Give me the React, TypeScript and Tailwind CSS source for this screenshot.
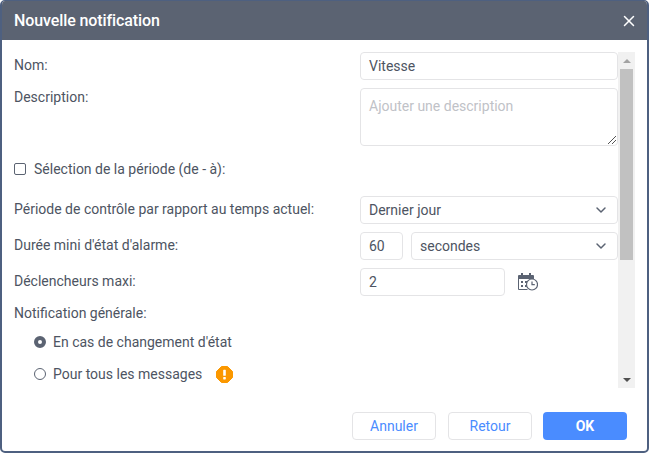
import React from 'react';
import { X, ChevronDown } from 'lucide-react';

const fieldClass = 'h-[28px] border border-[#e4e4e6] rounded-[4px] bg-white px-[8px] flex items-center text-[14px] text-[#4d5462]';

const SelectBox = ({ value, className }: { value: string; className: string }) => (
  <div className={`${fieldClass} justify-between ${className}`}>
    <span>{value}</span>
    <ChevronDown className="w-[16px] h-[16px] text-[#5b6372]" strokeWidth={2.2} />
  </div>
);

const Row = ({ label, className, labelClass = 'pt-[1px]', children }: { label: string; className: string; labelClass?: string; children?: React.ReactNode }) => (
  <div className={`flex items-start ${className}`}>
    <div className={`w-[346px] shrink-0 leading-[24px] ${labelClass}`}>{label}</div>
    {children}
  </div>
);

const CalendarClock = () => (
  <svg width="20" height="18" viewBox="0 0 20 18" className="ml-[13px] mt-[5px]">
    <path d="M3 0h2v2h6V0h2v2h2a1 1 0 0 1 1 1v3H0V3a1 1 0 0 1 1-1h2z" fill="#5b6372" />
    <path d="M.5 6v10.5h9" fill="none" stroke="#5b6372" />
    <rect x="3" y="8" width="2" height="2" fill="#5b6372" />
    <rect x="3" y="12" width="2" height="2" fill="#5b6372" />
    <rect x="7" y="8" width="2" height="2" fill="#5b6372" />
    <rect x="7" y="12" width="2" height="2" fill="#5b6372" />
    <circle cx="14" cy="11.5" r="5.5" fill="#fff" stroke="#5b6372" strokeWidth="1.2" />
    <path d="M14 8.5v3.2h2.8" fill="none" stroke="#5b6372" strokeWidth="1.2" />
  </svg>
);

const WarnBadge = () => (
  <svg width="17" height="17" viewBox="0 0 17 17" className="ml-[14px]">
    <path d="M5.5 .5h6l5 5v6l-5 5h-6l-5-5v-6z" fill="#fb9800" stroke="#fb9800" strokeLinejoin="round" />
    <rect x="7.2" y="3.8" width="2.6" height="6" rx="0.6" fill="#fff" />
    <rect x="7.2" y="11" width="2.6" height="2.4" rx="0.6" fill="#fff" />
  </svg>
);

const App = () => {
  return (
    <div className="w-[649px] h-[453px] bg-white border-[2px] border-t-[1px] border-[#4e6080] rounded-[5px] flex flex-col overflow-hidden font-['Roboto',sans-serif] text-[14px] text-[#4d5462]">
      {/* Header */}
      <div className="h-[39px] shrink-0 mx-[-2px] bg-[#5b6372] flex items-center justify-between pl-[14px] pr-[11px]">
        <span className="text-[16px] font-medium tracking-[-0.1px] text-white">Nouvelle notification</span>
        <X className="w-[18px] h-[18px] text-white" strokeWidth={2} />
      </div>

      {/* Scroll area */}
      <div className="flex h-[336px] mt-[12px] shrink-0">
        <div className="flex-1 pl-[12px] overflow-hidden">
          <Row label="Nom:" className="">
            <div className={`${fieldClass} w-[258px]`}>Vitesse</div>
          </Row>
          <Row label="Description:" labelClass="mt-[-3px]" className="mt-[8px]">
            <div className="relative w-[258px] h-[58px] border border-[#e4e4e6] rounded-[4px] px-[8px] pt-[7px] leading-[20px] text-[#bfc2c7]">
              Ajouter une description
              <svg width="10" height="10" viewBox="0 0 10 10" className="absolute right-0 bottom-0">
                <path d="M1 9L9 1M5 9L9 5" stroke="#555" strokeWidth="1" fill="none" />
              </svg>
            </div>
          </Row>
          <div className="flex items-center mt-[13px] h-[20px]">
            <span className="w-[12px] h-[12px] border border-[#5b6372] rounded-[2px] mr-[8px]" />
            <span>Sélection de la période (de - à):</span>
          </div>
          <Row label="Période de contrôle par rapport au temps actuel:" className="mt-[17px]">
            <SelectBox value="Dernier jour" className="w-[258px]" />
          </Row>
          <Row label="Durée mini d'état d'alarme:" className="mt-[8px]">
            <div className="flex gap-[8px] w-[258px]">
              <div className={`${fieldClass} w-[43px]`}>60</div>
              <SelectBox value="secondes" className="flex-1" />
            </div>
          </Row>
          <Row label="Déclencheurs maxi:" className="mt-[8px]">
            <div className={`${fieldClass} w-[145px]`}>2</div>
            <CalendarClock />
          </Row>
          <div className="mt-[5px] leading-[24px]">Notification générale:</div>
          <div className="flex items-center h-[20px] mt-[7px] pl-[20px]">
            <span className="w-[12px] h-[12px] rounded-full bg-white border-[4px] border-[#5b6372] mr-[7px]" />
            <span>En cas de changement d'état</span>
          </div>
          <div className="flex items-center h-[20px] mt-[12px] pl-[20px]">
            <span className="w-[12px] h-[12px] rounded-full border border-[#5b6372] mr-[7px]" />
            <span>Pour tous les messages</span>
            <WarnBadge />
          </div>
        </div>

        {/* Scrollbar */}
        <div className="w-[17px] shrink-0 bg-[#f1f1f1] flex flex-col items-center mr-[12px]">
          <div className="h-[17px] flex items-center justify-center">
            <span className="w-0 h-0 border-x-[4px] border-x-transparent border-b-[4px] border-b-[#a3a3a3]" />
          </div>
          <div className="w-[13px] h-[191px] bg-[#c1c1c1]" />
          <div className="flex-1" />
          <div className="h-[17px] flex items-center justify-center">
            <span className="w-0 h-0 border-x-[4px] border-x-transparent border-t-[4px] border-t-[#505050]" />
          </div>
        </div>
      </div>

      {/* Footer */}
      <div className="flex justify-end gap-[12px] pr-[20px] mt-[24px]">
        <button className="w-[84px] h-[28px] border border-[#e4e4e6] rounded-[4px] bg-white text-[#4a8cff]">Annuler</button>
        <button className="w-[84px] h-[28px] border border-[#e4e4e6] rounded-[4px] bg-white text-[#4a8cff] mr-[-1px]">Retour</button>
        <button className="w-[84px] h-[28px] rounded-[4px] bg-[#4a8cff] font-bold text-white">OK</button>
      </div>
    </div>
  );
};

export default App;
